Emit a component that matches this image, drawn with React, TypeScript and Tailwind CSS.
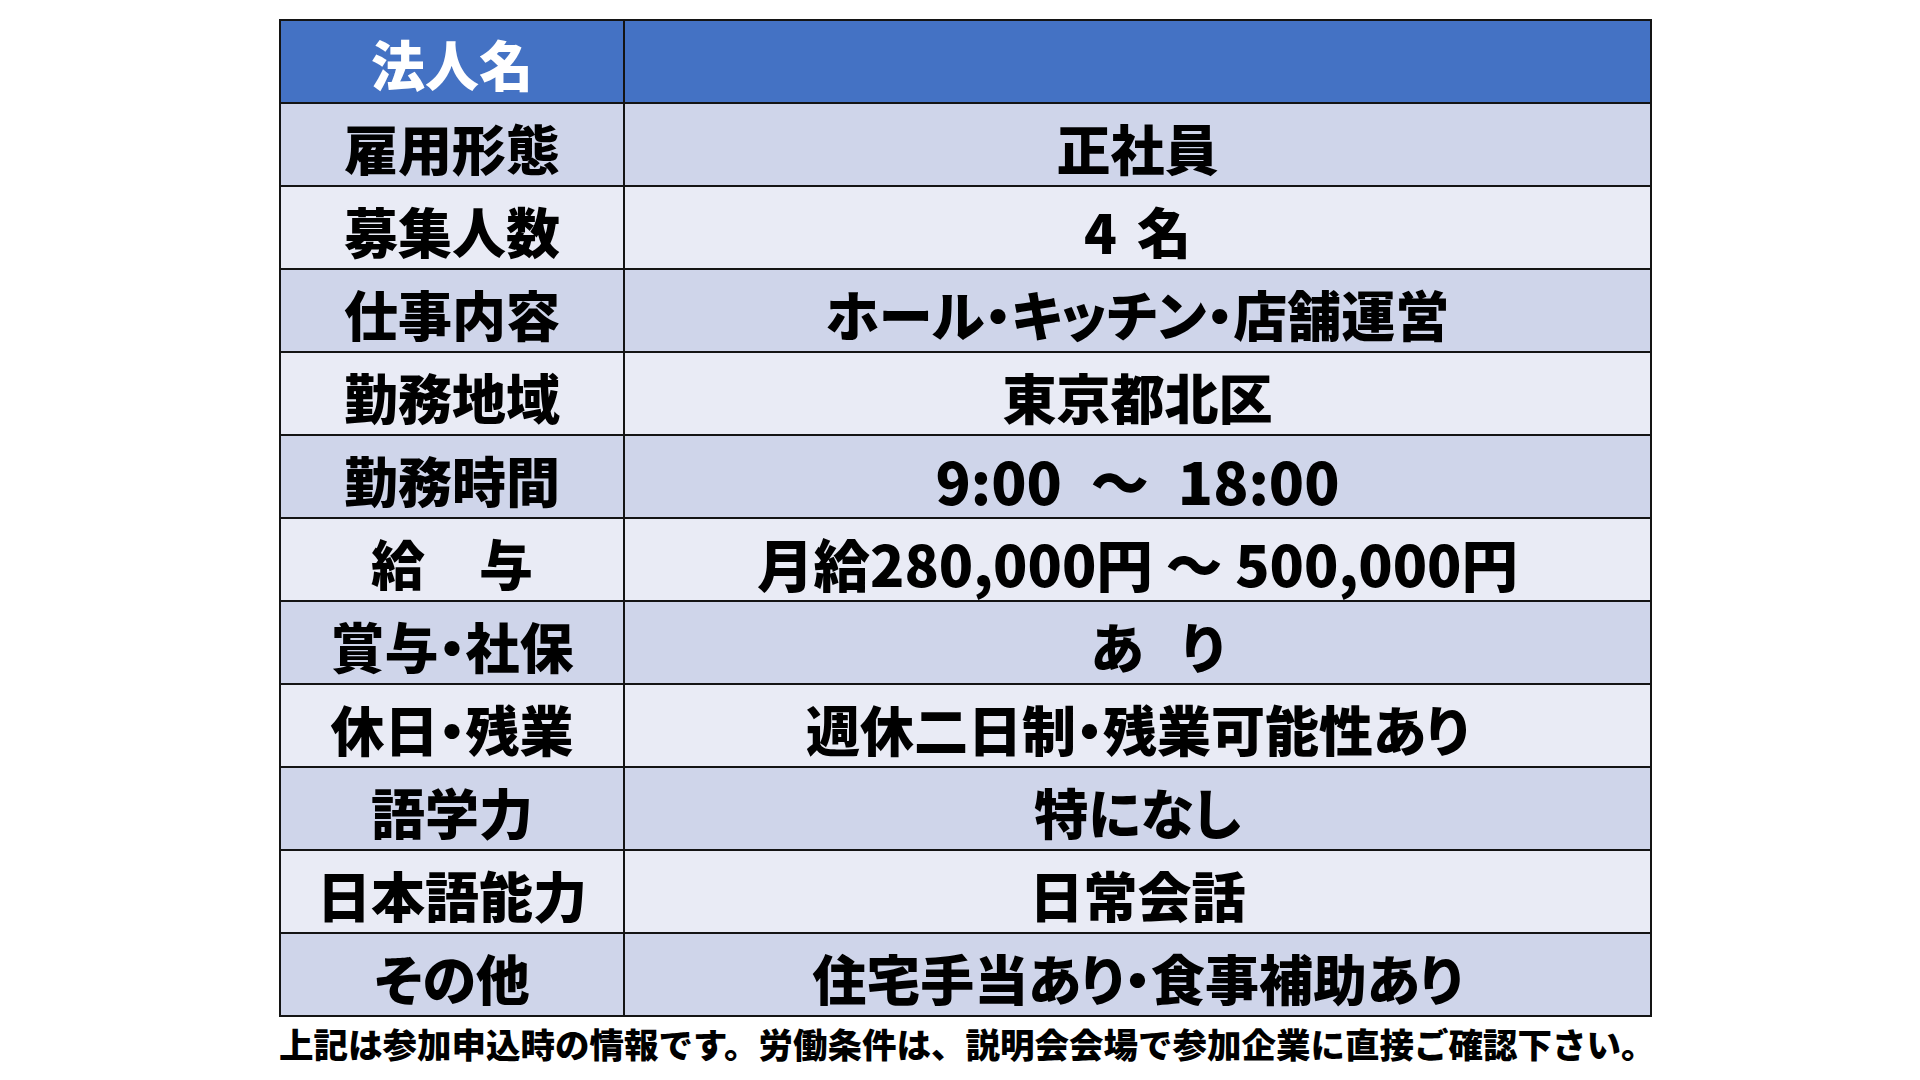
import type { ReactNode } from "react";

const rows: { label: string; value: ReactNode; size?: string }[] = [
  { label: "雇用形態", value: "正社員" },
  {
    label: "募集人数",
    value: (
      <>
        4<span className="inline-block w-[20px]" />名
      </>
    ),
  },
  { label: "仕事内容", value: "ホール・キッチン・店舗運営" },
  { label: "勤務地域", value: "東京都北区" },
  { label: "勤務時間", value: "9:00\u2002～\u200218:00", size: "text-[58px]" },
  { label: "給　与", value: "月給280,000円 ～ 500,000円", size: "text-[56.5px]" },
  {
    label: "賞与・社保",
    value: (
      <span className="inline-block pl-[40px]">
        あ<span className="inline-block w-[38px]" />り
      </span>
    ),
  },
  { label: "休日・残業", value: "週休二日制・残業可能性あり" },
  { label: "語学力", value: "特になし" },
  { label: "日本語能力", value: "日常会話" },
  { label: "その他", value: "住宅手当あり・食事補助あり" },
];

export default function App() {
  return (
    <div className="w-[1920px] h-[1080px] bg-white text-black font-['Noto_Sans_CJK_JP','Noto_Sans_CJK_SC',sans-serif]">
      <div className="pl-[279px] pt-[19px]">
        <table className="w-[1373px] border-collapse border-2 border-[#141414] table-fixed">
          <colgroup>
            <col className="w-[344px]" />
            <col />
          </colgroup>
          <tbody>
            <tr className="h-[83px] bg-[#4472c4]">
              <td className="border-2 border-[#141414] text-center text-white font-black text-[54px] leading-none pt-[4px]">
                法人名
              </td>
              <td className="border-2 border-[#141414]" />
            </tr>
            {rows.map((r, i) => (
              <tr
                key={r.label}
                className={`h-[83px] ${i % 2 === 0 ? "bg-[#cfd5ea]" : "bg-[#e9ebf5]"}`}
              >
                <td className="border-2 border-[#141414] text-center font-black text-[54px] leading-none pt-[6px] whitespace-nowrap [font-feature-settings:'palt']">
                  {r.label}
                </td>
                <td
                  className={`border-2 border-[#141414] text-center font-black leading-none pt-[6px] whitespace-nowrap [font-feature-settings:'palt'] ${
                    r.size ?? "text-[54px]"
                  }`}
                >
                  {r.value}
                </td>
              </tr>
            ))}
          </tbody>
        </table>
        <p className="mt-[6px] text-[34.5px] leading-[40px] font-black whitespace-nowrap">
          上記は参加申込時の情報です。労働条件は、説明会会場で参加企業に直接ご確認下さい。
        </p>
      </div>
    </div>
  );
}
